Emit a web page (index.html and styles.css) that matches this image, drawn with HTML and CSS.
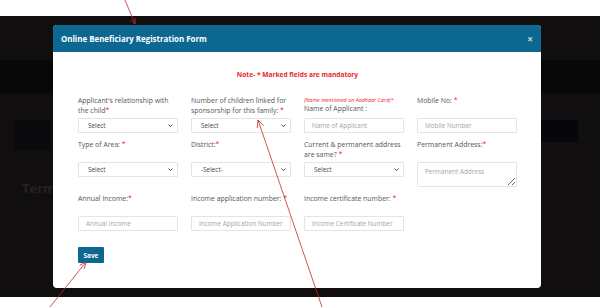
FILE: index.html
```html
<!DOCTYPE html>
<html lang="en">
<head>
<meta charset="utf-8">
<title>Online Beneficiary Registration Form</title>
<link rel="stylesheet" href="styles.css">
</head>
<body>
<div class="screen">
  <div class="page">
    <div class="band"></div>
    <div class="stripe"><div class="lbox"></div><div class="rbox"></div></div>
    <h2 class="terms">Terms</h2>
  </div>
  <div class="modal">
    <div class="modal-header">
      <h5 class="modal-title">Online Beneficiary Registration Form</h5>
      <span class="close">×</span>
    </div>
    <div class="modal-body">
      <p class="note">Note- * Marked fields are mandatory</p>
      <div class="grid">
        <div class="field">
          <label class="label">Applicant's relationship with the child<span class="req">*</span></label>
          <div class="select-wrap"><select class="control select"><option>Select</option></select><svg class="chev" viewBox="0 0 6 4"><path d="M0.6 0.6 L3 3 L5.4 0.6" fill="none" stroke="#333" stroke-width="1.1"/></svg></div>
        </div>
        <div class="field">
          <label class="label">Number of children linked for sponsorship for this family: <span class="req">*</span></label>
          <div class="select-wrap"><select class="control select"><option>Select</option></select><svg class="chev" viewBox="0 0 6 4"><path d="M0.6 0.6 L3 3 L5.4 0.6" fill="none" stroke="#333" stroke-width="1.1"/></svg></div>
        </div>
        <div class="field">
          <label class="label"><span class="hint">(Name mentioned on Aadhaar Card)*</span>Name of Applicant :</label>
          <input class="control" placeholder="Name of Applicant">
        </div>
        <div class="field">
          <label class="label">Mobile No: <span class="req">*</span></label>
          <input class="control" placeholder="Mobile Number">
        </div>

        <div class="field">
          <label class="label">Type of Area: <span class="req">*</span></label>
          <div class="select-wrap"><select class="control select"><option>Select</option></select><svg class="chev" viewBox="0 0 6 4"><path d="M0.6 0.6 L3 3 L5.4 0.6" fill="none" stroke="#333" stroke-width="1.1"/></svg></div>
        </div>
        <div class="field">
          <label class="label">District:<span class="req">*</span></label>
          <div class="select-wrap"><select class="control select"><option>-Select-</option></select><svg class="chev" viewBox="0 0 6 4"><path d="M0.6 0.6 L3 3 L5.4 0.6" fill="none" stroke="#333" stroke-width="1.1"/></svg></div>
        </div>
        <div class="field">
          <label class="label">Current &amp; permanent address are same? <span class="req">*</span></label>
          <div class="select-wrap"><select class="control select"><option>Select</option></select><svg class="chev" viewBox="0 0 6 4"><path d="M0.6 0.6 L3 3 L5.4 0.6" fill="none" stroke="#333" stroke-width="1.1"/></svg></div>
        </div>
        <div class="field">
          <label class="label">Permanent Address:<span class="req">*</span></label>
          <textarea class="control area" placeholder="Permanent Address"></textarea>
        </div>

        <div class="field">
          <label class="label">Annual Income:<span class="req">*</span></label>
          <input class="control" placeholder="Annual Income">
        </div>
        <div class="field">
          <label class="label">Income application number: <span class="req">*</span></label>
          <input class="control" placeholder="Income Application Number">
        </div>
        <div class="field">
          <label class="label">Income certificate number: <span class="req">*</span></label>
          <input class="control" placeholder="Income Certificate Number">
        </div>
      </div>
      <button class="save">Save</button>
    </div>
  </div>
</div>
<svg class="arrows" viewBox="0 0 603 307" width="603" height="307">
  <g fill="none" stroke="#c42a2a" stroke-width="0.8">
    <path d="M125 0 L135 24 M135.2 18 L135 24 L130.6 20"/>
    <path d="M322 307 L258 120 M257.2 128 L258 120 L263.6 125.8"/>
    <path d="M50 307 L86 262 M79.7 265.1 L86 262 L84.3 268.8"/>
  </g>
</svg>
</body>
</html>
```
FILE: styles.css
```css
* { box-sizing: border-box; }
body {
  margin: 0;
  width: 603px;
  height: 307px;
  position: relative;
  overflow: hidden;
  background: #fff;
  font-family: "Open Sans", "Liberation Sans", sans-serif;
}
.screen {
  margin-top: 16px;
  width: 600px;
  height: 281px;
  background: #100e0e;
  position: relative;
  overflow: hidden;
}
.page { display: flex; flex-direction: column; }
.band { margin-top: 44px; height: 33px; background: #090808; }
.stripe {
  display: flex;
  justify-content: space-between;
  align-items: flex-start;
  margin-top: 27px;
  padding: 0 22px 0 15px;
}
.lbox { width: 35px; height: 30px; background: #0a0a0d; }
.rbox { width: 38px; height: 22px; background: #05070b; }
.terms {
  margin: 30px 0 0 22px;
  font-size: 13px;
  font-weight: 700;
  color: #252222;
  line-height: 16px;
}
.modal {
  position: absolute;
  left: 53px;
  top: 9px;
  width: 488px;
  height: 263px;
  background: #fff;
  border-radius: 4px;
  overflow: hidden;
  display: flex;
  flex-direction: column;
}
.modal-header {
  height: 27px;
  flex: none;
  background: #0c6891;
  display: flex;
  align-items: center;
  justify-content: space-between;
  padding: 0 8px;
}
.modal-title {
  margin: 0;
  color: #fff;
  font-size: 7.9px;
  font-weight: 700;
}
.close {
  color: #c9d6dd;
  font-size: 10px;
  font-weight: 700;
  line-height: 10px;
}
.modal-body { padding: 18px 24px 0 25px; }
.note {
  margin: 0 0 16px;
  text-align: center;
  color: #e8262a;
  font-weight: 700;
  font-size: 6.6px;
  line-height: 10px;
}
.grid {
  display: grid;
  grid-template-columns: repeat(4, 100px);
  column-gap: 13px;
  row-gap: 7px;
  align-items: start;
}
.field { display: flex; flex-direction: column; }
.label {
  display: block;
  min-height: 20px;
  margin-bottom: 2px;
  font-size: 6.9px;
  line-height: 10px;
  color: #555;
}
.req { color: #e8262a; }
.hint {
  display: block;
  font-size: 5.4px;
  font-style: italic;
  line-height: 8px;
  color: #e8262a;
  white-space: nowrap;
}
.control {
  display: block;
  width: 100%;
  height: 15px;
  border: 1px solid #e4e4e4;
  border-radius: 1px;
  background: #fff;
  padding: 0 7px;
  font-family: "Open Sans", "Liberation Sans", sans-serif;
  font-size: 6.4px;
  color: #444;
  outline: none;
}
.control::placeholder { color: #a5a5a5; }
.select-wrap { position: relative; }
.select { appearance: none; -webkit-appearance: none; padding-left: 9px; }
.chev {
  position: absolute;
  right: 5px;
  top: 6px;
  width: 5px;
  height: 3.5px;
}
.area {
  height: 25px;
  padding: 4px 7px;
  resize: vertical;
}
.save {
  display: block;
  margin-top: 16px;
  width: 26px;
  height: 16px;
  padding: 0;
  border: 0;
  border-radius: 1px;
  background: #0c6891;
  color: #fff;
  font-family: "Open Sans", "Liberation Sans", sans-serif;
  font-size: 6.4px;
  font-weight: 700;
}
.arrows {
  position: absolute;
  left: 0;
  top: 0;
  pointer-events: none;
}
```
